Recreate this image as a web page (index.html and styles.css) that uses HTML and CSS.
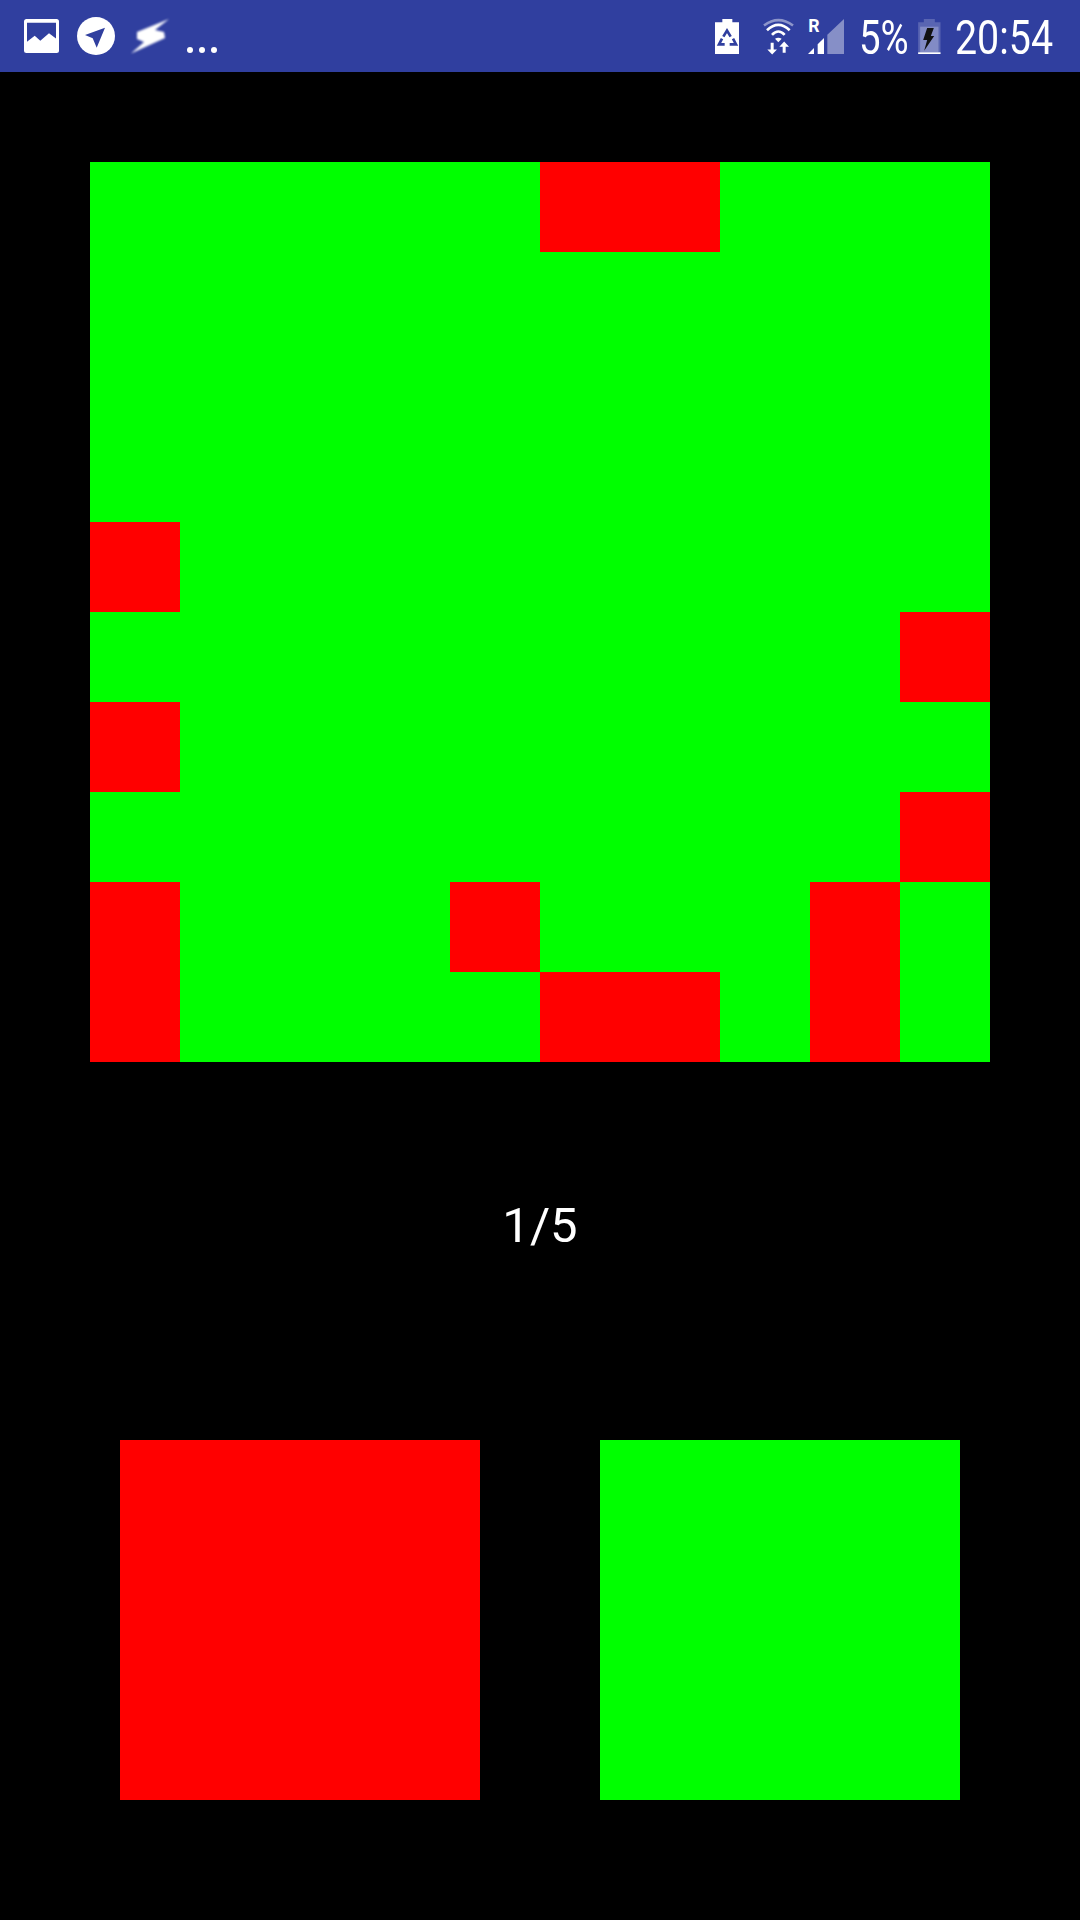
FILE: index.html
```html
<!DOCTYPE html>
<html>
<head>
    <meta charset="UTF-8">
    <title>1/5</title>
    <link rel="stylesheet" href="styles.css">
</head>
<body>
    <div class="status-bar">
        <div class="status-left">
            <svg class="icon-image" viewBox="0 0 35 34">
                <rect width="35" height="34" rx="2.5" fill="#fff"/>
                <polygon points="3,3.7 32,3.7 32,19.5 25,14.3 16.3,21.7 10.7,16.7 3,22.7" fill="#303f9f"/>
            </svg>
            <svg class="icon-nav" viewBox="0 0 38 38">
                <circle cx="19" cy="19" r="19" fill="#fff"/>
                <polygon points="28,10.7 19.7,30.7 15.7,21.3 8,18" fill="#303f9f"/>
            </svg>
            <svg class="icon-flash" viewBox="0 0 36 33">
                <polygon class="flash-shape" points="37,-1 5,12 5,19 12,22 -1,33.500 33,18 32,12 23,10" fill="#fff"/>
            </svg>
            <svg class="icon-more" viewBox="0 0 32 6">
                <circle cx="3" cy="3" r="3" fill="#fff"/>
                <circle cx="15" cy="3" r="3" fill="#fff"/>
                <circle cx="27" cy="3" r="3" fill="#fff"/>
            </svg>
        </div>
        <div class="status-right">
            <svg class="icon-saver" viewBox="75 55 72 105">
                <path d="M97 55h30v10h20v95H75V65h22z" fill="#fff"/>
                <g fill="none" stroke="#303f9f" stroke-width="8">
                    <path d="M100 108l11-18 11 18"/>
                    <path d="M96 114l-9 17h17"/>
                    <path d="M129 114l9 17h-19"/>
                </g>
            </svg>
            <svg class="icon-wifi" viewBox="222 52 93 110">
                <path d="M225 74Q268 42 312 74" fill="none" stroke="#fff" stroke-opacity="0.45" stroke-width="8"/>
                <path d="M234 88Q268 56 302 88M249 102Q268 82 287 102" fill="none" stroke="#fff" stroke-width="8"/>
                <path d="M258 114q10-6 20 0l-10 10z" fill="#fff"/>
                <path d="M245 126h9v20h10l-14.500 15-14.500-15h10z" fill="#fff"/>
                <path d="M281 156h9v-18h10l-14.500-16-14.500 16h10z" fill="#fff"/>
            </svg>
            <svg class="icon-signal" viewBox="354 55 108 105">
                <text class="roam" x="355" y="94">R</text>
                <polygon points="354,160 372,142 372,160" fill="#fff"/>
                <polygon points="383,131 402,112 402,160 383,160" fill="#fff"/>
                <polygon points="412,102 462,55 462,160 412,160" fill="#fff" fill-opacity="0.42"/>
            </svg>
            <span class="percent">5%</span>
            <svg class="icon-battery" viewBox="685 55 68 105">
                <path d="M702 55h33v10h17v95h-67V65h17z" fill="#fff" fill-opacity="0.2"/>
                <rect x="691" y="78" width="55" height="77" fill="#fff" fill-opacity="0.25"/>
                <rect x="685" y="155" width="67" height="5" fill="#fff"/>
                <polygon points="712,82 732,82 723,106 733,106 703,150 712,118 700,118" fill="#111"/>
            </svg>
            <span class="clock">20:54</span>
        </div>
    </div>

    <div class="board">
        <div class="cell"></div><div class="cell"></div><div class="cell"></div><div class="cell"></div><div class="cell"></div><div class="cell red"></div><div class="cell red"></div><div class="cell"></div><div class="cell"></div><div class="cell"></div>
        <div class="cell"></div><div class="cell"></div><div class="cell"></div><div class="cell"></div><div class="cell"></div><div class="cell"></div><div class="cell"></div><div class="cell"></div><div class="cell"></div><div class="cell"></div>
        <div class="cell"></div><div class="cell"></div><div class="cell"></div><div class="cell"></div><div class="cell"></div><div class="cell"></div><div class="cell"></div><div class="cell"></div><div class="cell"></div><div class="cell"></div>
        <div class="cell"></div><div class="cell"></div><div class="cell"></div><div class="cell"></div><div class="cell"></div><div class="cell"></div><div class="cell"></div><div class="cell"></div><div class="cell"></div><div class="cell"></div>
        <div class="cell red"></div><div class="cell"></div><div class="cell"></div><div class="cell"></div><div class="cell"></div><div class="cell"></div><div class="cell"></div><div class="cell"></div><div class="cell"></div><div class="cell"></div>
        <div class="cell"></div><div class="cell"></div><div class="cell"></div><div class="cell"></div><div class="cell"></div><div class="cell"></div><div class="cell"></div><div class="cell"></div><div class="cell"></div><div class="cell red"></div>
        <div class="cell red"></div><div class="cell"></div><div class="cell"></div><div class="cell"></div><div class="cell"></div><div class="cell"></div><div class="cell"></div><div class="cell"></div><div class="cell"></div><div class="cell"></div>
        <div class="cell"></div><div class="cell"></div><div class="cell"></div><div class="cell"></div><div class="cell"></div><div class="cell"></div><div class="cell"></div><div class="cell"></div><div class="cell"></div><div class="cell red"></div>
        <div class="cell red"></div><div class="cell"></div><div class="cell"></div><div class="cell"></div><div class="cell red"></div><div class="cell"></div><div class="cell"></div><div class="cell"></div><div class="cell red"></div><div class="cell"></div>
        <div class="cell red"></div><div class="cell"></div><div class="cell"></div><div class="cell"></div><div class="cell"></div><div class="cell red"></div><div class="cell red"></div><div class="cell"></div><div class="cell red"></div><div class="cell"></div>
    </div>

    <div class="counter">1/5</div>

    <div class="answers">
        <button class="answer answer-red"></button>
        <button class="answer answer-green"></button>
    </div>
</body>
</html>
```

FILE: styles.css
```css
body {
    margin: 0;
    padding: 0;
    width: 1080px;
    height: 1920px;
    background: #000;
    color: #fff;
    font-family: Roboto, sans-serif;
    overflow: hidden;
}

.status-bar {
    display: flex;
    justify-content: space-between;
    align-items: center;
    height: 72px;
    background: #303f9f;
}

.status-left {
    display: flex;
    align-items: center;
    padding-left: 24px;
}

.status-right {
    display: flex;
    align-items: center;
    padding-right: 28px;
}

.status-bar svg {
    display: block;
    flex: none;
}

.icon-image {
    width: 35px;
    height: 34px;
    margin-right: 18px;
}

.icon-nav {
    width: 38px;
    height: 38px;
    margin-right: 17px;
}

.icon-flash {
    width: 36px;
    height: 33px;
    margin-right: 19px;
    overflow: visible;
}

.flash-shape {
    filter: blur(0.8px);
}

.icon-more {
    width: 32px;
    height: 6px;
    margin-top: 28px;
}

.icon-saver {
    width: 24px;
    height: 35px;
    margin-right: 24px;
}

.icon-wifi {
    width: 31px;
    height: 37px;
    margin-right: 14px;
}

.icon-signal {
    width: 36px;
    height: 35px;
    overflow: visible;
}

.roam {
    font-family: Roboto, sans-serif;
    font-weight: 700;
    font-size: 53px;
    fill: #fff;
}

.percent,
.clock {
    display: inline-block;
    margin-top: 3px;
    font-size: 48px;
    line-height: 69px;
    white-space: nowrap;
    transform-origin: left center;
}

.percent {
    width: 47px;
    margin-left: 15px;
    margin-right: 12px;
    transform: scaleX(0.8);
}

.icon-battery {
    width: 23px;
    height: 35px;
    margin-right: 14px;
}

.clock {
    width: 97px;
    transform: scaleX(0.82);
}

.board {
    display: grid;
    grid-template-columns: repeat(10, 90px);
    grid-auto-rows: 90px;
    width: 900px;
    margin: 90px auto 0;
}

.cell {
    background: #0f0;
}

.cell.red {
    background: #f00;
}

.counter {
    margin-top: 132px;
    height: 64px;
    line-height: 64px;
    text-align: center;
    font-size: 49px;
}

.answers {
    display: flex;
    justify-content: center;
    gap: 120px;
    margin-top: 182px;
}

.answer {
    display: block;
    width: 360px;
    height: 360px;
    border: none;
    padding: 0;
}

.answer-red {
    background: #f00;
}

.answer-green {
    background: #0f0;
}
```
